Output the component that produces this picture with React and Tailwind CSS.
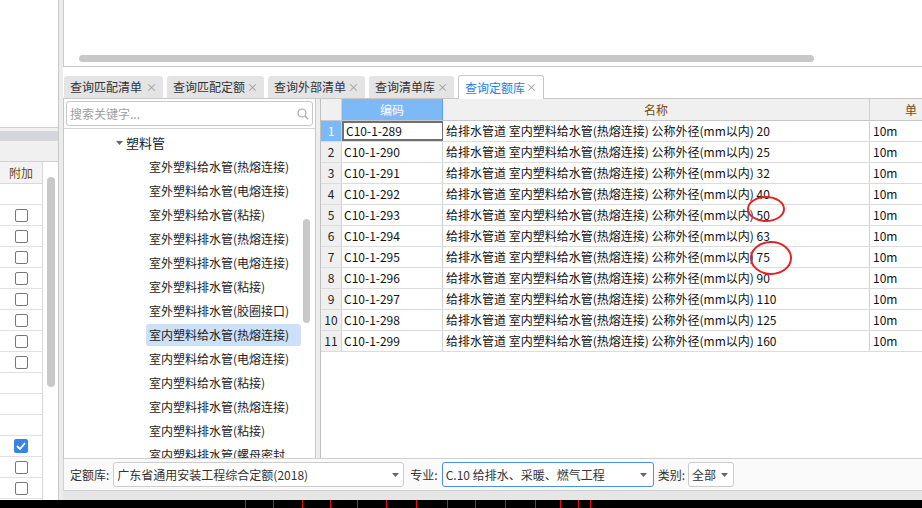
import React from 'react';

const cjk = { fontFamily: '"Noto Sans CJK SC", "Noto Sans", sans-serif' };

const leftRows = ['none', 'box', 'box', 'box', 'box', 'box', 'box', 'box', 'box', 'none', 'none', 'none', 'checked', 'box', 'box'];

const tabs = [
    { label: '查询匹配清单', w: 'w-[99px]' },
    { label: '查询匹配定额', w: 'w-[97px]' },
    { label: '查询外部清单', w: 'w-[97px]' },
    { label: '查询清单库', w: 'w-[85px]' },
];

const treeItems = [
    '室外塑料给水管(热熔连接)',
    '室外塑料给水管(电熔连接)',
    '室外塑料给水管(粘接)',
    '室外塑料排水管(热熔连接)',
    '室外塑料排水管(电熔连接)',
    '室外塑料排水管(粘接)',
    '室外塑料排水管(胶圈接口)',
    '室内塑料给水管(热熔连接)',
    '室内塑料给水管(电熔连接)',
    '室内塑料给水管(粘接)',
    '室内塑料排水管(热熔连接)',
    '室内塑料排水管(粘接)',
    '室内塑料排水管(螺母密封...',
];

const rows = [
    ['C10-1-289', '20'],
    ['C10-1-290', '25'],
    ['C10-1-291', '32'],
    ['C10-1-292', '40'],
    ['C10-1-293', '50'],
    ['C10-1-294', '63'],
    ['C10-1-295', '75'],
    ['C10-1-296', '90'],
    ['C10-1-297', '110'],
    ['C10-1-298', '125'],
    ['C10-1-299', '160'],
];

const redLines = [245, 273, 302, 330, 357, 386, 416, 447, 475, 505, 535, 560, 578, 590];

const Arrow = () => (
    <svg width="7" height="4" viewBox="0 0 7 4" className="shrink-0">
        <path d="M0 0 L7 0 L3.5 4 Z" fill="#666" />
    </svg>
);

const App = () => {
    return (
        <div className="w-[922px] h-[508px] overflow-hidden bg-white relative text-[#333]" style={cjk}>
            <div className="flex h-[500px]">

                {/* Left strip */}
                <div className="w-[59px] flex flex-col border-r border-[#c8c8c8] bg-white">
                    <div className="h-[128px] border-b border-[#cfcfcf]"></div>
                    <div className="h-[3px] bg-[#f0f0f0]"></div>
                    <div className="h-[10px] bg-[#d5d6dc]"></div>
                    <div className="h-[21px] bg-[#f0f0f0] border-b border-[#d0d0d0]"></div>
                    <div className="flex flex-1 min-h-0">
                        <div className="w-[43px] flex flex-col border-r border-[#d8d8d8]">
                            <div className="h-[22px] shrink-0 bg-[#f3f3f3] border-b border-[#d8d8d8] flex items-center justify-center text-[12px] text-[#6a4a20]">
                                附加
                            </div>
                            {leftRows.map((r, i) => (
                                <div key={i} className="h-[21px] shrink-0 border-b border-[#e0e0e0] flex items-center justify-center">
                                    {r === 'box' && (
                                        <div className="w-[13px] h-[13px] rounded-[2px] border border-[#777] bg-white"></div>
                                    )}
                                    {r === 'checked' && (
                                        <div className="w-[14px] h-[14px] rounded-[2px] bg-[#3b82e6] flex items-center justify-center">
                                            <svg width="10" height="8" viewBox="0 0 10 8">
                                                <path d="M1 4 L4 7 L9 1" stroke="white" strokeWidth="1.8" fill="none" />
                                            </svg>
                                        </div>
                                    )}
                                </div>
                            ))}
                        </div>
                        <div className="flex-1 flex justify-center pt-[15px]">
                            <div className="w-[8px] h-[210px] rounded-full bg-[#c9c9c9]"></div>
                        </div>
                    </div>
                </div>

                <div className="w-[4px] bg-[#ececec]"></div>

                {/* Main */}
                <div className="flex-1 flex flex-col min-w-0">
                    <div className="h-[67px] bg-white border-l border-b border-[#c9c9c9] flex items-end pb-[4px] pl-[15px]">
                        <div className="w-[735px] h-[7px] rounded-full bg-[#c8c8c8]"></div>
                    </div>

                    {/* Tabs */}
                    <div className="h-[32px] bg-white flex items-end gap-[4px] pl-[1px] border-b border-[#c8c8c8]">
                        {tabs.map((t) => (
                            <div key={t.label} className={`${t.w} h-[22px] bg-[#e4e4e4] rounded-t-[3px] flex items-center justify-between px-[6px] text-[12px] text-[#333]`}>
                                <span>{t.label}</span>
                                <span className="text-[#999] text-[11px]">×</span>
                            </div>
                        ))}
                        <div className="w-[86px] h-[24px] bg-white border border-b-0 border-[#c8c8c8] rounded-t-[3px] flex items-center justify-between px-[6px] text-[12px] text-[#2b7ce0] mb-[-1px]">
                            <span>查询定额库</span>
                            <span className="text-[#999] text-[11px]">×</span>
                        </div>
                    </div>

                    {/* Content */}
                    <div className="h-[359px] flex bg-[#eeeeee]">
                        {/* Tree */}
                        <div className="w-[253px] flex flex-col bg-white border-l border-r border-[#c8c8c8]">
                            <div className="h-[30px] px-[2px] pt-[2px] border-b border-[#d6d6d6]">
                                <div className="h-[25px] border border-[#c8c8c8] rounded-[3px] flex items-center justify-between px-[3px] text-[12px] text-[#a0a0a0]">
                                    <span>搜索关键字...</span>
                                    <svg width="12" height="12" viewBox="0 0 12 12">
                                        <circle cx="5" cy="5" r="4" stroke="#aaa" strokeWidth="1.2" fill="none" />
                                        <path d="M8 8 L11 11" stroke="#aaa" strokeWidth="1.2" />
                                    </svg>
                                </div>
                            </div>
                            <div className="flex flex-1 min-h-0">
                                <div className="flex-1 flex flex-col overflow-hidden pt-[2px]">
                                    <div className="h-[24px] shrink-0 flex items-center pl-[52px] gap-[3px] text-[13px] text-[#222]">
                                        <Arrow />
                                        <span>塑料管</span>
                                    </div>
                                    {treeItems.map((item, i) => (
                                        <div key={i} className="h-[24px] shrink-0 flex items-center pl-[82px]">
                                            <span className={`px-[3px] h-[22px] w-[155px] flex items-center rounded-[3px] text-[12px] text-[#222] whitespace-nowrap ${i === 7 ? 'bg-[#cce0f7]' : ''}`}>
                                                {item}
                                            </span>
                                        </div>
                                    ))}
                                </div>
                                <div className="w-[12px] pt-[90px] pr-[3px]">
                                    <div className="w-[7px] h-[104px] rounded-full bg-[#c9c9c9]"></div>
                                </div>
                            </div>
                        </div>

                        <div className="w-[4px]"></div>

                        {/* Grid */}
                        <div className="flex-1 flex flex-col bg-white border-l border-[#c0c0c0] min-w-0 text-[12px]">
                            <div className="h-[22px] flex border-b border-[#c8c8c8] bg-[#f0f0f0]">
                                <div className="w-[21px] border-r border-[#d0d0d0]"></div>
                                <div className="w-[101px] bg-[#7db8f7] text-white flex items-center justify-center border-r border-[#5d9de4]">编码</div>
                                <div className="w-[427px] flex items-center justify-center border-r border-[#d0d0d0] text-[#7a4a10]">名称</div>
                                <div className="flex-1 flex items-center pl-[35px] text-[#7a4a10]">单</div>
                            </div>
                            {rows.map((r, i) => (
                                <div key={r[0]} className="h-[21px] flex border-b border-[#dcdcdc] text-[#111]">
                                    <div className={`w-[21px] flex items-center justify-center border-r border-[#d0d0d0] ${i === 0 ? 'bg-[#7db8f7] text-white' : 'bg-[#efefef] text-[#222]'}`}>
                                        {i + 1}
                                    </div>
                                    <div className={`w-[101px] flex items-center pl-[2px] border-r ${i === 0 ? 'border-2 border-[#707070]' : 'border-[#d0d0d0]'}`}>
                                        {r[0]}
                                    </div>
                                    <div className="w-[427px] flex items-center pl-[3px] border-r border-[#d0d0d0] whitespace-nowrap">
                                        给排水管道 室内塑料给水管(热熔连接) 公称外径(mm以内) {r[1]}
                                    </div>
                                    <div className="flex-1 flex items-center pl-[3px]">10m</div>
                                </div>
                            ))}
                        </div>
                    </div>

                    {/* Bottom bar */}
                    <div className="h-[32px] bg-[#fafafa] border-t border-[#d0d0d0] border-l flex items-center pl-[6px] text-[12px] text-[#333]">
                        <span>定额库:</span>
                        <div className="ml-[4px] w-[291px] h-[25px] bg-white border border-[#cccccc] rounded-[3px] flex items-center justify-between px-[3px] pr-[4px]">
                            <span>广东省通用安装工程综合定额(2018)</span>
                            <Arrow />
                        </div>
                        <span className="ml-[6px]">专业:</span>
                        <div className="ml-[4px] w-[212px] h-[25px] bg-white border border-[#4a8fe0] rounded-[3px] flex items-center justify-between px-[3px] pr-[6px]">
                            <span>C.10 给排水、采暖、燃气工程</span>
                            <Arrow />
                        </div>
                        <span className="ml-[4px]">类别:</span>
                        <div className="ml-[3px] w-[46px] h-[25px] bg-white border border-[#cccccc] rounded-[3px] flex items-center justify-between px-[3px] pr-[5px]">
                            <span>全部</span>
                            <Arrow />
                        </div>
                    </div>
                    <div className="flex-1 bg-[#e6e6e6] border-t border-[#d0d0d0]"></div>
                </div>
            </div>

            {/* Bottom black strip */}
            <div className="h-[8px] bg-black relative">
                {redLines.map((x) => (
                    <div key={x} className="absolute top-0 w-[1px] h-[8px] bg-[#e01010]" style={{ left: x }}></div>
                ))}
            </div>

            {/* Red annotation circles */}
            <svg className="absolute inset-0 pointer-events-none" width="922" height="508">
                <ellipse cx="766" cy="209" rx="18" ry="12" stroke="#e02424" strokeWidth="2" fill="none" />
                <ellipse cx="771" cy="258" rx="20" ry="16" stroke="#e02424" strokeWidth="2" fill="none" />
            </svg>
        </div>
    );
};

export default App;
